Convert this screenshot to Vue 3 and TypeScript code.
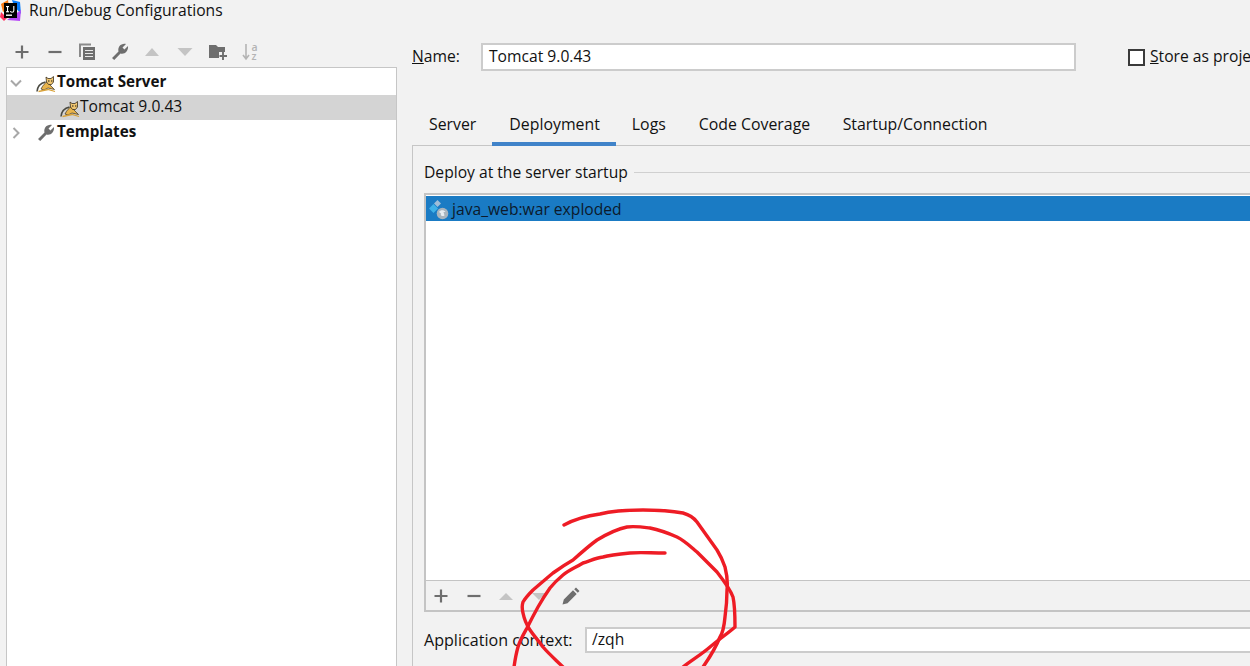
<script setup lang="ts">
const tabs: string[] = ['Server', 'Deployment', 'Logs', 'Code Coverage', 'Startup/Connection']
const activeTab = 'Deployment'
const scribbles: string[] = [
  'M564 525 C575 519 585 516 600 514 C615 510 630 510 643 510 C660 510 672 511 683 513 C690 515 694 518 697 522 L717 550 C722 558 725 567 725 567 C727 575 728 582 727 590 C727 600 726 610 725 617 C724 628 722 634 720 637 C716 647 710 657 703 667',
  'M665 553 C650 553 640 552 630 553 C620 554 610 555 603 557 C595 558 590 561 583 563 C575 568 569 570 563 575 C557 580 554 583 550 588 C545 595 542 600 538 607 C533 616 530 622 527 628 C523 635 520 640 518 647 C516 654 515 660 514 667',
  'M563 667 C556 660 549 654 543 647 C538 640 534 636 530 630 C526 624 524 618 523 613 C522 609 522 605 523 602 C526 597 530 593 533 590 C540 584 547 578 553 573 C560 568 566 564 573 560 C582 552 590 545 597 540 C607 534 617 529 627 527 C635 526 642 527 650 528 C660 530 668 533 677 537 C685 541 691 547 697 552 C704 559 711 566 717 572 C724 581 730 589 733 597 C735 606 735 617 735 627 C727 634 718 640 710 647 C702 654 692 660 683 667',
]
</script>

<template>
  <div class="screen">
    <header class="title">
      <svg class="logo" width="22" height="22" viewBox="0 0 22 22">
        <path d="M1 4 L8 0 L9 8 L3 12Z" fill="#f97a12" />
        <path d="M1 12 L7 18 L4 21 L0 17Z" fill="#fe315d" />
        <path d="M12 0 L20 2 L21 14 L14 6Z" fill="#087cfa" />
        <path d="M7 20 L20 21 L21 10Z" fill="#b74af7" />
        <rect x="4" y="3" width="13" height="15" fill="#000" />
        <rect x="6" y="14.5" width="6" height="1.4" fill="#fff" />
        <rect x="6" y="6" width="3" height="1.1" fill="#fff" />
        <rect x="7" y="6" width="1.1" height="6" fill="#fff" />
        <rect x="6" y="11.2" width="3" height="1.1" fill="#fff" />
        <path d="M13.8 6 V10.8 Q13.8 12.2 12 12.2 Q10.6 12.2 10.4 11" fill="none" stroke="#fff" stroke-width="1.1" />
      </svg>
      <span class="title-text">Run/Debug Configurations</span>
    </header>

    <div class="main">
      <aside class="left">
        <div class="toolbar">
          <svg viewBox="0 0 18 18"><path d="M9 2.5 V15.5 M2.5 9 H15.5" stroke="#6e6e6e" stroke-width="2.2" /></svg>
          <svg viewBox="0 0 18 18"><path d="M2.5 9 H15.5" stroke="#6e6e6e" stroke-width="2.2" /></svg>
          <svg viewBox="0 0 18 18"><path d="M1 0.5 H13 V2.5 H3 V14 H1Z" fill="#8a8a8a" /><path d="M5 4 H17 V17 H5Z" fill="#6e6e6e" /><path d="M7 7.5 H15 M7 10.5 H15 M7 13.5 H15" stroke="#e8e8e8" stroke-width="1" /></svg>
          <svg viewBox="0 0 18 18"><path d="M1 15 L7.5 8.5 C6.5 4 10 0 15 1 L11.5 4.6 L13.4 6.6 L17 3 C17.7 8 13.5 11.7 9.5 10.5 L3.2 17 Z" fill="#6e6e6e" /></svg>
          <svg viewBox="0 0 18 18"><path d="M2 13 L9 5 L16 13Z" fill="#c4c4c4" /></svg>
          <svg viewBox="0 0 18 18"><path d="M1.5 5 L16.5 5 L9 13Z" fill="#c4c4c4" /></svg>
          <svg viewBox="0 0 18 18"><path d="M0 2 H7 L9 4 H16 V9 H10 V15 H0Z" fill="#6e6e6e" /><path d="M14 9 V17 M10.5 13 H18" stroke="#6e6e6e" stroke-width="1.9" /></svg>
          <svg viewBox="0 0 18 18"><path d="M5 1 V16 M2 12 L5 16 L8 12" fill="none" stroke="#b4b4b4" stroke-width="1.6" /><text class="az"><tspan x="10.5" y="7.5">a</tspan><tspan x="10.5" y="16.5">z</tspan></text></svg>
        </div>
        <div class="tree">
          <div class="row bold">
            <svg class="chev" width="14" height="14" viewBox="0 0 14 14"><path d="M2 4.5 L7 9.5 L12 4.5" fill="none" stroke="#a8a8a8" stroke-width="2" /></svg>
            <svg class="cat cat-1" width="20" height="18" viewBox="0 0 20 18"><use href="#tomcat" /></svg>
            <span>Tomcat Server</span>
          </div>
          <div class="row selected">
            <svg class="cat cat-2" width="20" height="18" viewBox="0 0 20 18">
              <defs>
                <g id="tomcat">
                  <path d="M1 16.5 C1.5 11 5 8 9.5 7" fill="none" stroke="#4a4a42" stroke-width="1.5" />
                  <path d="M5 14 C7 10 9 8 11 7 L14 10 L18.5 14.5 L12 13 L8 15 Z" fill="#e8b44c" stroke="#3a3020" stroke-width="0.7" />
                  <path d="M10 2 L12 3.5 H15 L17.5 1.5 L17.5 7 L15.5 9.5 H12.5 L10.5 7Z" fill="#f0c670" stroke="#3a3020" stroke-width="0.8" />
                  <path d="M12 6 H13.5 M15 6 H16.4" stroke="#1c1a14" stroke-width="1" />
                  <path d="M2.5 16.5 L12 14.5 L19 16.5" fill="none" stroke="#d8a23a" stroke-width="1.3" />
                </g>
              </defs>
              <use href="#tomcat" />
            </svg>
            <span>Tomcat 9.0.43</span>
          </div>
          <div class="row bold">
            <svg class="chev" width="14" height="14" viewBox="0 0 14 14"><path d="M4.5 2 L9.5 7 L4.5 12" fill="none" stroke="#a8a8a8" stroke-width="2" /></svg>
            <svg class="wrench" width="18" height="18" viewBox="0 0 18 18"><path d="M1 15 L7.5 8.5 C6.5 4 10 0 15 1 L11.5 4.6 L13.4 6.6 L17 3 C17.7 8 13.5 11.7 9.5 10.5 L3.2 17 Z" fill="#6e6e6e" /></svg>
            <span>Templates</span>
          </div>
        </div>
      </aside>

      <section class="right">
        <div class="name-row">
          <label class="name-label"><u>N</u>ame:</label>
          <div class="field name-field"><span>Tomcat 9.0.43</span></div>
          <span class="check"></span>
          <span class="store"><u>S</u>tore as project file</span>
        </div>

        <nav class="tabs">
          <span v-for="t in tabs" :key="t" class="tab" :class="{ active: t === activeTab }">{{ t }}</span>
        </nav>

        <div class="panel">
          <div class="legend"><span>Deploy at the server startup</span><i></i></div>
          <div class="list">
            <div class="list-body">
              <div class="list-item">
                <svg width="22" height="22" viewBox="0 0 22 22">
                  <path d="M10.5 2 L14 5.5 L10.5 9 L7 5.5Z" fill="#9fbdd8" />
                  <path d="M6.5 6 L11 10.5 L6.5 15 L2 10.5Z" fill="#3fb1e8" />
                  <circle cx="15.5" cy="15.5" r="5.8" fill="#a8b4be" />
                  <path d="M12 14 C13.5 11.5 17 11.5 18.5 14 L16.5 14 L17.5 17.5 C15.5 19 13 17.5 14 15.5Z" fill="#e7edf2" />
                </svg>
                <span>java_web:war exploded</span>
              </div>
            </div>
            <div class="list-tools">
              <svg viewBox="0 0 18 18"><path d="M9 2.5 V15.5 M2.5 9 H15.5" stroke="#6e6e6e" stroke-width="2.2" /></svg>
              <svg viewBox="0 0 18 18"><path d="M2.5 9 H15.5" stroke="#6e6e6e" stroke-width="2.2" /></svg>
              <svg viewBox="0 0 18 18"><path d="M2 13 L9 6 L16 13Z" fill="#c4c4c4" /></svg>
              <svg viewBox="0 0 18 18"><path d="M2 6 L16 6 L9 13Z" fill="#c4c4c4" /></svg>
              <svg viewBox="0 0 18 18"><path d="M0.5 17.5 L1.8 12.5 L11 3.3 L14.7 7 L5.5 16.2Z M12.2 2.2 L14 0.5 L17.5 4 L15.8 5.8Z" fill="#6e6e6e" /></svg>
            </div>
          </div>
          <div class="context-row">
            <label>Application context:</label>
            <div class="field context-field"><span>/zqh</span></div>
          </div>
        </div>
      </section>
    </div>

    <svg class="scribble" width="1250" height="666" viewBox="0 0 1250 666">
      <path v-for="(d, i) in scribbles" :key="i" :d="d" fill="none" stroke="#ee1c25" stroke-width="3.4" stroke-linecap="round" stroke-linejoin="round" />
    </svg>
  </div>
</template>

<style scoped>
.screen {
  position: relative;
  width: 1250px;
  height: 666px;
  overflow: hidden;
  background: #f2f2f2;
  color: #111;
  font-family: "Open Sans", "Noto Sans", sans-serif;
  font-size: 15.65px;
  display: flex;
  flex-direction: column;
}
.title {
  height: 22px;
  display: flex;
  align-items: center;
  flex: none;
}
.logo { flex: none; }
.title-text { margin-left: 7px; margin-bottom: 2px; }
.main {
  flex: 1;
  display: flex;
  min-height: 0;
}
.left {
  width: 391px;
  margin-left: 6px;
  flex: none;
  display: flex;
  flex-direction: column;
}
.toolbar {
  height: 45px;
  flex: none;
  display: flex;
  align-items: center;
  padding: 15px 0 0 7px;
  box-sizing: border-box;
  gap: 14.6px;
}
.toolbar svg, .list-tools svg { width: 18px; height: 18px; flex: none; overflow: visible; }
.az { font-size: 10.5px; font-weight: 600; fill: #b4b4b4; font-family: "Open Sans", sans-serif; }
.tree {
  flex: 1;
  background: #fff;
  border: 1px solid #c6c6c6;
  border-bottom: 0;
  padding-top: 2px;
}
.row {
  height: 25px;
  display: flex;
  align-items: center;
}
.row span { margin-bottom: 3px; }
.row.bold { font-weight: 700; font-size: 15.2px; }
.row.selected { background: #d4d4d4; }
.chev { margin-left: 2px; flex: none; }
.cat-1 { margin-left: 13px; margin-right: 1px; flex: none; margin-top: 3px; }
.cat-2 { margin-left: 53px; flex: none; margin-top: 3px; }
.wrench { margin-left: 14px; margin-right: 2px; flex: none; margin-top: 1px; }
.right {
  flex: 1;
  min-width: 0;
  margin-left: 15px;
  display: flex;
  flex-direction: column;
}
.name-row {
  height: 28px;
  margin-top: 21px;
  display: flex;
  align-items: center;
  flex: none;
  white-space: nowrap;
}
.name-label, .store, .field span { margin-bottom: 2px; }
.name-label { width: 69px; flex: none; }
.field {
  box-sizing: border-box;
  background: #fff;
  border: 2px solid #cccccc;
  display: flex;
  align-items: center;
  padding-left: 6px;
}
.name-field { width: 595px; height: 28px; flex: none; }
.check {
  width: 17px;
  height: 17px;
  box-sizing: border-box;
  border: 2px solid #3a3a3a;
  background: #fff;
  margin-left: 52px;
  flex: none;
}
.store { margin-left: 5px; }
.tabs {
  height: 32px;
  margin-top: 43px;
  margin-bottom: -1px;
  display: flex;
  flex: none;
  position: relative;
  z-index: 1;
  white-space: nowrap;
  font-size: 15.85px;
}
.tab {
  height: 32px;
  box-sizing: border-box;
  padding: 0 16px;
  line-height: 21px;
}
.tab:first-child { padding-left: 17px; }
.tab.active {
  padding-left: 17px;
  border-bottom: 4px solid #4083c9;
}
.tab:nth-child(3) { padding-right: 17px; }
.tab:nth-child(4) { padding-right: 16.5px; }
.panel {
  flex: 1;
  min-height: 0;
  border: 1px solid #c6c6c6;
  border-right: 0;
  border-bottom: 0;
  padding: 15px 0 0 11px;
  display: flex;
  flex-direction: column;
}
.legend {
  height: 22px;
  display: flex;
  align-items: center;
  gap: 6px;
  flex: none;
}
.legend span { margin-bottom: 1px; }
.legend i {
  flex: 1;
  height: 1px;
  background: #d0d0d0;
}
.list {
  height: 419px;
  margin-top: 10px;
  border: 2px solid #c4c4c4;
  border-right: 0;
  box-sizing: border-box;
  display: flex;
  flex-direction: column;
  flex: none;
  background: #fff;
}
.list-body {
  flex: 1;
  padding-top: 1px;
}
.list-item {
  height: 25px;
  background: #1a7bc4;
  display: flex;
  align-items: center;
  gap: 3px;
  padding-left: 1px;
  color: #0c1a2c;
}
.list-tools {
  height: 29px;
  flex: none;
  background: #f2f2f2;
  border-top: 1px solid #c4c4c4;
  display: flex;
  align-items: center;
  padding-left: 6px;
  gap: 14.6px;
}
.context-row {
  display: flex;
  align-items: center;
  margin-top: 15px;
  height: 26px;
  flex: none;
}
.context-row label { width: 161px; flex: none; font-size: 16.1px; margin-bottom: 1px; white-space: nowrap; }
.context-field { flex: 1; height: 26px; padding-left: 5px; border-right: 0; }
.scribble {
  position: absolute;
  left: 0;
  top: 0;
  pointer-events: none;
}
</style>

<style>
html, body { margin: 0; background: #f2f2f2; }
</style>
